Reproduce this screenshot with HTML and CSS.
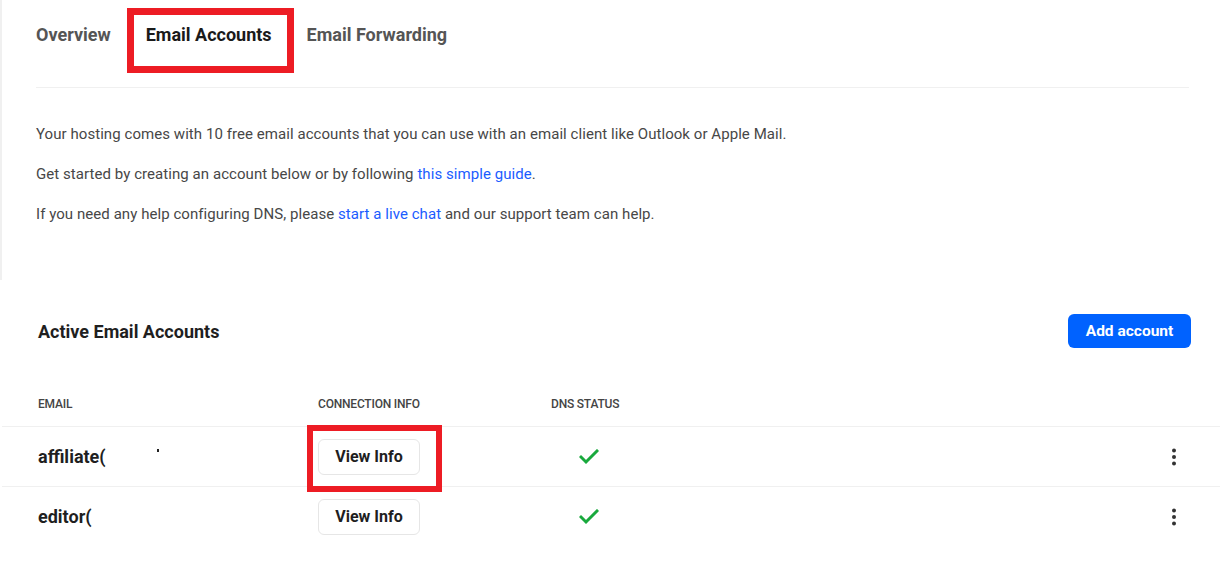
FILE: index.html
```html
<!DOCTYPE html>
<html>
<head>
<meta charset="utf-8">
<link rel="stylesheet" href="styles.css">
</head>
<body>
<section class="intro">
  <nav class="tabs">
    <div class="tab">Overview</div>
    <div class="tab active">Email Accounts<span class="mark mark-tab"></span></div>
    <div class="tab">Email Forwarding</div>
  </nav>
  <div class="copy">
    <p>Your hosting comes with 10 free email accounts that you can use with an email client like Outlook or Apple Mail.</p>
    <p>Get started by creating an account below or by following <a href="#">this simple guide</a>.</p>
    <p>If you need any help configuring DNS, please <a href="#">start a live chat</a> and our support team can help.</p>
  </div>
</section>

<section class="accounts">
  <div class="accounts-head">
    <h2>Active Email Accounts</h2>
    <button class="btn-primary">Add account</button>
  </div>
  <div class="table">
    <div class="row head">
      <div class="cell">EMAIL</div>
      <div class="cell">CONNECTION INFO</div>
      <div class="cell">DNS STATUS</div>
      <div class="cell"></div>
    </div>
    <div class="row">
      <div class="cell email">affiliate(<span class="speck"></span></div>
      <div class="cell"><button class="btn-ghost">View Info<span class="mark mark-btn"></span></button></div>
      <div class="cell status"><svg width="20" height="16" viewBox="0 0 20 16"><polyline points="2,8 7,13 18,2" fill="none" stroke="#19a93d" stroke-width="3" stroke-linecap="square"/></svg></div>
      <div class="cell more"><svg width="6" height="20" viewBox="0 0 6 20"><circle cx="3" cy="3.5" r="2" fill="#333"/><circle cx="3" cy="10" r="2" fill="#333"/><circle cx="3" cy="16.5" r="2" fill="#333"/></svg></div>
    </div>
    <div class="row">
      <div class="cell email">editor(</div>
      <div class="cell"><button class="btn-ghost">View Info</button></div>
      <div class="cell status"><svg width="20" height="16" viewBox="0 0 20 16"><polyline points="2,8 7,13 18,2" fill="none" stroke="#19a93d" stroke-width="3" stroke-linecap="square"/></svg></div>
      <div class="cell more"><svg width="6" height="20" viewBox="0 0 6 20"><circle cx="3" cy="3.5" r="2" fill="#333"/><circle cx="3" cy="10" r="2" fill="#333"/><circle cx="3" cy="16.5" r="2" fill="#333"/></svg></div>
    </div>
  </div>
</section>
</body>
</html>
```

FILE: styles.css
```css
* { box-sizing: border-box; }
html, body { margin: 0; padding: 0; background: #fff; }
body {
  font-family: Roboto, "Liberation Sans", Arial, sans-serif;
  color: #1f1f1f;
  width: 1220px;
  height: 561px;
  overflow: hidden;
}

.intro {
  border-left: 2px solid #f0f0f0;
  height: 280px;
  padding: 0 31px 0 34px;
}

.tabs {
  display: flex;
  gap: 35px;
  border-bottom: 1px solid #f0f0f0;
  height: 88px;
  padding-top: 22px;
}
.tab {
  position: relative;
  font-size: 18px;
  font-weight: 700;
  color: #555;
  line-height: 26px;
  height: 26px;
}
.tab.active { color: #1a1a1a; }

.mark {
  position: absolute;
  border: 7px solid #ed1c24;
  pointer-events: none;
}
.mark-tab {
  left: -19px;
  top: -14px;
  width: 167px;
  height: 65px;
}

.copy { padding-top: 34px; }
.copy p {
  margin: 0 0 16px;
  font-size: 15px;
  line-height: 24px;
  letter-spacing: 0.06px;
  color: #474747;
}
.copy a { color: #1a5cff; text-decoration: none; }

.accounts-head {
  display: flex;
  align-items: center;
  justify-content: space-between;
  padding: 34px 29px 0 38px;
}
.accounts-head h2 {
  margin: 0;
  font-size: 18px;
  font-weight: 700;
  color: #1f1f1f;
}
.btn-primary {
  background: #0062ff;
  color: #fff;
  border: 0;
  border-radius: 6px;
  height: 34px;
  width: 123px;
  font-family: inherit;
  font-size: 15.5px;
  font-weight: 700;
  padding: 0;
}

.table {
  margin-top: 44px;
  margin-left: 2px;
}
.row {
  display: grid;
  grid-template-columns: 280px 233px 1fr 92px;
  align-items: center;
  padding-left: 36px;
  height: 60px;
  border-top: 1px solid #f0f0f0;
}
.row.head {
  border-top: 0;
  height: 34px;
  align-items: start;
}
.row.head .cell {
  font-size: 12px;
  letter-spacing: -0.2px;
  font-weight: 500;
  color: #444;
  line-height: 16px;
  padding-top: 4px;
}
.email {
  font-size: 18px;
  font-weight: 700;
  color: #1f1f1f;
  position: relative;
}
.speck {
  position: absolute;
  left: 119px;
  top: 3px;
  width: 2px;
  height: 3px;
  background: #222;
}
.btn-ghost {
  position: relative;
  background: #fff;
  border: 1px solid #e6e6e6;
  border-radius: 6px;
  width: 102px;
  height: 36px;
  font-family: inherit;
  font-size: 16px;
  font-weight: 700;
  color: #1f1f1f;
  padding: 0;
}
.mark-btn {
  left: -12px;
  top: -15px;
  width: 135px;
  height: 67px;
  border-width: 6px;
}
.status {
  display: flex;
  padding-left: 28px;
}
.more {
  display: flex;
  justify-content: center;
}
```
